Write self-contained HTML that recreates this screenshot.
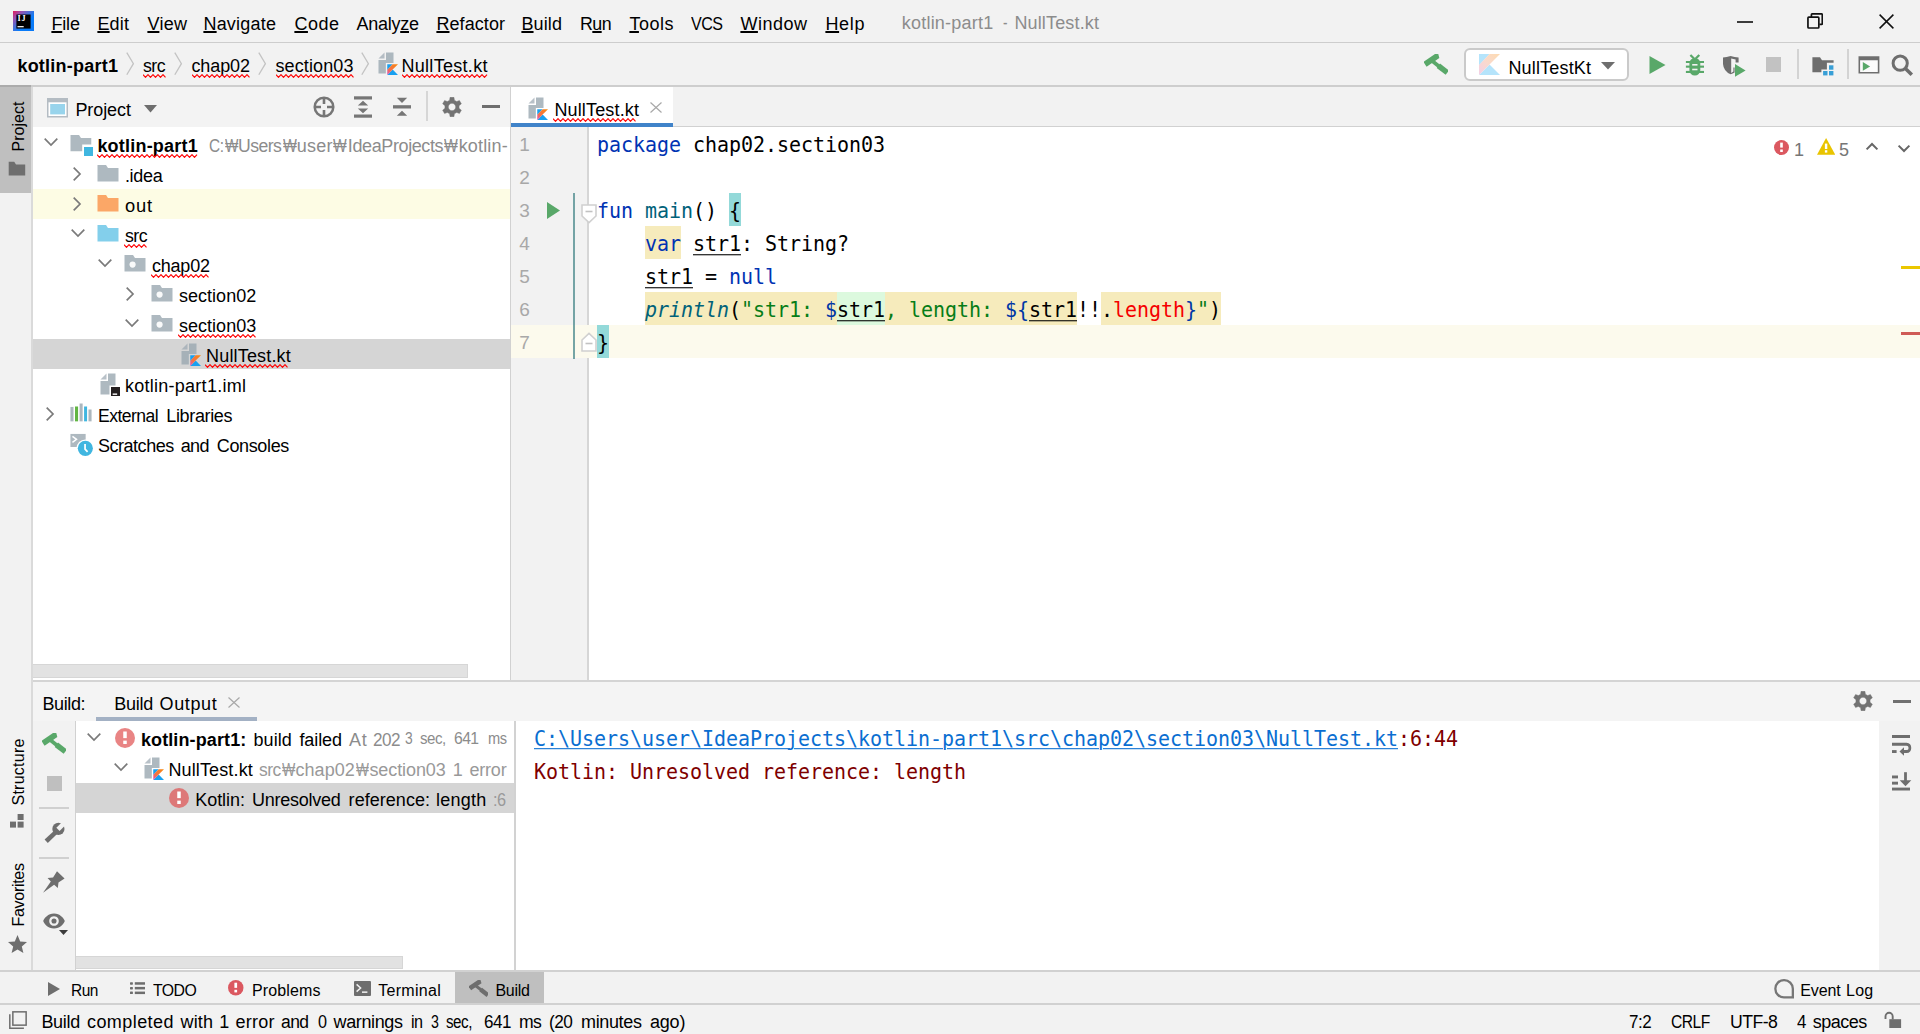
<!DOCTYPE html>
<html lang="en"><head><meta charset="utf-8"><title>kotlin-part1 - NullTest.kt</title>
<style>
html,body{margin:0;padding:0}
body{width:1920px;height:1034px;overflow:hidden;background:#f2f2f2;position:relative;font-family:"Liberation Sans","NanumGothic",sans-serif;font-size:18px;color:#000}
#r>div,#r>svg,#r>span{position:absolute;display:block}
#r>span{white-space:pre;line-height:1}
#r>span.m{font-family:"DejaVu Sans Mono","Liberation Mono",monospace}
u{text-decoration:underline;text-underline-offset:0.6px;text-decoration-thickness:1.8px}
</style></head>
<body><div id="r">
<svg style="left:12.5px;top:10.5px;" width="21" height="20.6" viewBox="0 0 21 20.6"><defs><linearGradient id="ijg" x1="0" y1="0" x2="1" y2="1"><stop offset="0" stop-color="#e31b5c"/><stop offset=".22" stop-color="#9850b0"/><stop offset=".42" stop-color="#4a6fd6"/><stop offset=".62" stop-color="#087cfa"/><stop offset="1" stop-color="#0a78f5"/></linearGradient></defs><rect width="21" height="20.6" fill="url(#ijg)"/><rect x="3.4" y="3.5" width="14.2" height="14.1" fill="#000"/><text x="4.4" y="10.3" font-family="Liberation Serif,serif" font-weight="700" font-size="8.2" letter-spacing=".9" fill="#fff">IJ</text><rect x="4.5" y="15.1" width="6.2" height="1.2" fill="#fff"/></svg>
<span style="font-size:18px;color:#000;letter-spacing:-0.139px;left:51.4px;top:14.76px;"><u>F</u>ile</span>
<span style="font-size:18px;color:#000;letter-spacing:0.190px;left:97.4px;top:14.76px;"><u>E</u>dit</span>
<span style="font-size:18px;color:#000;letter-spacing:0.299px;left:147.4px;top:14.76px;"><u>V</u>iew</span>
<span style="font-size:18px;color:#000;letter-spacing:0.222px;left:203.4px;top:14.76px;"><u>N</u>avigate</span>
<span style="font-size:18px;color:#000;letter-spacing:0.518px;left:294.4px;top:14.76px;"><u>C</u>ode</span>
<span style="font-size:18px;color:#000;letter-spacing:-0.241px;left:356.4px;top:14.76px;">Analy<u>z</u>e</span>
<span style="font-size:18px;color:#000;letter-spacing:0.081px;left:436.4px;top:14.76px;"><u>R</u>efactor</span>
<span style="font-size:18px;color:#000;letter-spacing:0.138px;left:521.4px;top:14.76px;"><u>B</u>uild</span>
<span style="font-size:18px;color:#000;letter-spacing:-0.550px;left:580.4px;top:14.76px;transform-origin:0 0;transform:scaleX(0.9896);">R<u>u</u>n</span>
<span style="font-size:18px;color:#000;letter-spacing:0.517px;left:629.4px;top:14.76px;"><u>T</u>ools</span>
<span style="font-size:18px;color:#000;letter-spacing:-0.550px;left:691.4px;top:14.76px;transform-origin:0 0;transform:scaleX(0.8938);">VCS</span>
<span style="font-size:18px;color:#000;letter-spacing:0.514px;left:740.4px;top:14.76px;"><u>W</u>indow</span>
<span style="font-size:18px;color:#000;letter-spacing:0.690px;left:825.4px;top:14.76px;"><u>H</u>elp</span>
<span style="font-size:18px;color:#8c8c8c;letter-spacing:0.232px;left:901.7px;top:14.26px;">kotlin-part1</span>
 
<span style="font-size:18px;color:#8c8c8c;left:1002.5px;top:14.26px;transform-origin:0 0;transform:scaleX(0.7500);">-</span>
 
<span style="font-size:18px;color:#8c8c8c;letter-spacing:0.157px;left:1014.4px;top:14.26px;">NullTest.kt</span>
<div style="left:1737px;top:20.5px;width:16px;height:2px;background:#3c3c3c;"></div>
<svg style="left:1807px;top:13px;" width="16.4" height="16" viewBox="0 0 16.4 16"><path d="M4.4 4 V1.7 Q4.4 .95 5.1 .95 H14.6 Q15.3 .95 15.3 1.7 V10.7 Q15.3 11.4 14.6 11.4 H12.4" fill="none" stroke="#111" stroke-width="1.7"/><rect x=".95" y="4.2" width="10.9" height="10.8" rx=".8" fill="none" stroke="#111" stroke-width="1.7"/></svg>
<svg style="left:1878.5px;top:13.6px;" width="15" height="15" viewBox="0 0 15 15"><path d="M.6 .6 L14.4 14.4 M14.4 .6 L.6 14.4" stroke="#111" stroke-width="1.5"/></svg>
<div style="left:0px;top:42px;width:1920px;height:1px;background:#cdcdcd;"></div>
<span style="font-size:18px;color:#000;font-weight:700;letter-spacing:0.235px;left:17.4px;top:56.76px;">kotlin-part1</span>
<svg style="left:126px;top:52.3px;" width="9" height="23.4" viewBox="0 0 9 23.4"><path d="M.8 .6 L7.4 11.7 L.8 22.8" fill="none" stroke="#c3c3c3" stroke-width="1.3"/></svg>
<span style="font-size:18px;color:#000;letter-spacing:-0.550px;left:143.4px;top:56.76px;transform-origin:0 0;transform:scaleX(0.9869);">src</span>
<svg style="left:143px;top:74px" width="24" height="4" viewBox="0 0 24 4"><polyline points="0.0,0.7 2.5,3.3 5.0,0.7 7.5,3.3 10.0,0.7 12.5,3.3 15.0,0.7 17.5,3.3 20.0,0.7 22.5,3.3" fill="none" stroke="#ff0000" stroke-width="1.2"/></svg>
<svg style="left:174px;top:52.3px;" width="9" height="23.4" viewBox="0 0 9 23.4"><path d="M.8 .6 L7.4 11.7 L.8 22.8" fill="none" stroke="#c3c3c3" stroke-width="1.3"/></svg>
<span style="font-size:18px;color:#000;letter-spacing:-0.093px;left:191.4px;top:56.76px;">chap02</span>
<svg style="left:192px;top:74px" width="59" height="4" viewBox="0 0 59 4"><polyline points="0.0,0.7 2.5,3.3 5.0,0.7 7.5,3.3 10.0,0.7 12.5,3.3 15.0,0.7 17.5,3.3 20.0,0.7 22.5,3.3 25.0,0.7 27.5,3.3 30.0,0.7 32.5,3.3 35.0,0.7 37.5,3.3 40.0,0.7 42.5,3.3 45.0,0.7 47.5,3.3 50.0,0.7 52.5,3.3 55.0,0.7 57.5,3.3" fill="none" stroke="#ff0000" stroke-width="1.2"/></svg>
<svg style="left:258px;top:52.3px;" width="9" height="23.4" viewBox="0 0 9 23.4"><path d="M.8 .6 L7.4 11.7 L.8 22.8" fill="none" stroke="#c3c3c3" stroke-width="1.3"/></svg>
<span style="font-size:18px;color:#000;letter-spacing:0.130px;left:275.4px;top:56.76px;">section03</span>
<svg style="left:276px;top:74px" width="79" height="4" viewBox="0 0 79 4"><polyline points="0.0,0.7 2.5,3.3 5.0,0.7 7.5,3.3 10.0,0.7 12.5,3.3 15.0,0.7 17.5,3.3 20.0,0.7 22.5,3.3 25.0,0.7 27.5,3.3 30.0,0.7 32.5,3.3 35.0,0.7 37.5,3.3 40.0,0.7 42.5,3.3 45.0,0.7 47.5,3.3 50.0,0.7 52.5,3.3 55.0,0.7 57.5,3.3 60.0,0.7 62.5,3.3 65.0,0.7 67.5,3.3 70.0,0.7 72.5,3.3 75.0,0.7 77.5,3.3" fill="none" stroke="#ff0000" stroke-width="1.2"/></svg>
<svg style="left:361px;top:52.3px;" width="9" height="23.4" viewBox="0 0 9 23.4"><path d="M.8 .6 L7.4 11.7 L.8 22.8" fill="none" stroke="#c3c3c3" stroke-width="1.3"/></svg>
<svg style="left:374px;top:51px;" width="24" height="24" viewBox="0 0 16 16"><polygon points="7,1 3,5 7,5" fill="#9aa7b0" fill-opacity=".7"/><path d="M8,1 L13,1 L13,8 L7.9,8 L7.9,15 L3,15 L3,6 L8,6 Z" fill="#9aa7b0" fill-opacity=".8"/><g transform="translate(8.85,8.8) scale(0.11916666666666667)" opacity="1"><defs><linearGradient id="kg1" x1="0" y1="1" x2="1" y2="0"><stop offset="0" stop-color="#d650c8"/><stop offset=".35" stop-color="#f4704a"/><stop offset="1" stop-color="#f88909"/></linearGradient></defs><polygon points="0,60 30.1,29.9 60,60" fill="#18a0f0"/><polygon points="0,0 30.1,0 0,32.5" fill="#18a0f0"/><polygon points="30.1,0 0,31.7 0,60 30.1,29.9 60,0" fill="url(#kg1)"/></g></svg>
<span style="font-size:18px;color:#000;letter-spacing:0.307px;left:401.4px;top:56.76px;">NullTest.kt</span>
<svg style="left:402px;top:74px" width="86" height="4" viewBox="0 0 86 4"><polyline points="0.0,0.7 2.5,3.3 5.0,0.7 7.5,3.3 10.0,0.7 12.5,3.3 15.0,0.7 17.5,3.3 20.0,0.7 22.5,3.3 25.0,0.7 27.5,3.3 30.0,0.7 32.5,3.3 35.0,0.7 37.5,3.3 40.0,0.7 42.5,3.3 45.0,0.7 47.5,3.3 50.0,0.7 52.5,3.3 55.0,0.7 57.5,3.3 60.0,0.7 62.5,3.3 65.0,0.7 67.5,3.3 70.0,0.7 72.5,3.3 75.0,0.7 77.5,3.3 80.0,0.7 82.5,3.3 85.0,0.7" fill="none" stroke="#ff0000" stroke-width="1.2"/></svg>
<svg style="left:1424px;top:54px;" width="24" height="24" viewBox="0 0 24 24"><g transform="translate(7.6,5.8) rotate(-34)"><path d="M-8 -2.9 H6.2 Q8.2 -2.6 8.6 -0.6 L7.4 2.9 H-8 Z" fill="#59a869"/></g><g transform="translate(7.6,6.6) rotate(37.5)"><rect x="0" y="-1.9" width="10" height="3.8" fill="#59a869"/><rect x="8.5" y="-2.75" width="11.3" height="5.5" fill="#59a869"/></g></svg>
<div style="left:1464px;top:48px;width:165px;height:33px;background:#fff;border:2px solid #cacaca;border-radius:6px;box-sizing:border-box"></div>
<svg style="left:1479px;top:54.2px;" width="21" height="21" viewBox="0 0 21 21"><g transform="translate(0,0) scale(0.35)" opacity="1"><defs><linearGradient id="kg2" x1="0" y1="1" x2="1" y2="0"><stop offset="0" stop-color="#f3cfe6"/><stop offset=".45" stop-color="#f9d9cf"/><stop offset="1" stop-color="#fddbb0"/></linearGradient></defs><polygon points="0,60 30.1,29.9 60,60" fill="#b5e4fb"/><polygon points="0,0 30.1,0 0,32.5" fill="#b5e4fb"/><polygon points="30.1,0 0,31.7 0,60 30.1,29.9 60,0" fill="url(#kg2)"/></g></svg>
<span style="font-size:18px;color:#000;letter-spacing:0.174px;left:1508.4px;top:58.96px;">NullTestKt</span>
<svg style="left:1601px;top:61.5px;" width="14" height="8" viewBox="0 0 14 8"><path d="M0 0 H14 L7 7.5 Z" fill="#6e6e6e"/></svg>
<svg style="left:1649px;top:56px;" width="17" height="18" viewBox="0 0 17 18"><path d="M.5 0 L16.5 9 L.5 18 Z" fill="#59a869"/></svg>
<svg style="left:1683px;top:53px;" width="24" height="24" viewBox="0 0 24 24"><g fill="#59a869"><rect x="6.4" y="5" width="10.9" height="17.5" rx="5.4"/><rect x="2.9" y="8" width="18.1" height="2"/><rect x="2.9" y="12.6" width="18.1" height="2.1"/><rect x="2.9" y="17.9" width="18.1" height="2.1"/><path d="M7.4 1.9 L11.2 5.8 M16.3 1.9 L12.5 5.8" stroke="#59a869" stroke-width="2.2" fill="none"/></g><rect x="9.2" y="11" width="5.3" height="1.6" fill="#f2f2f2"/><rect x="9.2" y="15.7" width="5.3" height="1.6" fill="#f2f2f2"/></svg>
<svg style="left:1722px;top:54px;" width="24" height="24" viewBox="0 0 24 24"><path d="M1 3.4 Q4.5 3.2 8.6 1.9 Q12.6 3.2 16.6 3.4 V8.4 H13.6 V5.6 L9.2 4.6 V19 L11.4 17.4 V13.6 H12.6 V18.6 Q10.6 19.6 8.6 20.2 Q1.6 17.4 1 10 Z" fill="#6e6e6e"/><path d="M13 10 L23.6 16.4 L13 22.8 Z" fill="#59a869"/></svg>
<div style="left:1766px;top:57px;width:15px;height:15px;background:#c2c2c2;"></div>
<div style="left:1797px;top:49px;width:2px;height:30px;background:#d3d3d3;"></div>
<svg style="left:1810px;top:54px;" width="26" height="24" viewBox="0 0 26 24"><path d="M2.4 3.3 H10 L12 6.3 H23.6 V8.8 H16.9 V15.6 H11.4 V18.2 H2.4 Z" fill="#6e6e6e"/><g fill="#389fd6"><rect x="19" y="11.3" width="4.4" height="4.4"/><rect x="13.1" y="17" width="4.4" height="4.4"/><rect x="19" y="17" width="4.4" height="4.4"/></g></svg>
<div style="left:1847px;top:49px;width:2px;height:30px;background:#d3d3d3;"></div>
<svg style="left:1857px;top:54px;" width="24" height="22" viewBox="0 0 24 22"><rect x="1.5" y="2.2" width="20.9" height="17.4" fill="#fbfbfb"/><path d="M1.5 2.2 H22.4 V19.6 H1.5 Z M3.1 6.3 V17.9 H20.8 V6.3 Z" fill="#6e6e6e" fill-rule="evenodd"/><path d="M5.8 8 L13.1 12.4 L5.8 16.8 Z" fill="#59a869"/></svg>
<svg style="left:1889px;top:52px;" width="26" height="26" viewBox="0 0 26 26"><circle cx="11.2" cy="11.2" r="7.1" fill="none" stroke="#6e6e6e" stroke-width="3"/><path d="M16.4 16.4 L22.8 22.8" stroke="#6e6e6e" stroke-width="3.5"/></svg>
<div style="left:0px;top:85px;width:1920px;height:2px;background:#cecece;"></div>
<div style="left:0px;top:85px;width:31px;height:108px;background:#bfbfbf;"></div>
<div style="left:0px;top:85px;width:31px;height:2px;background:#ababab;"></div>
<div style="left:31px;top:87px;width:2px;height:883px;background:#dadada;"></div>
<span style="font-size:16px;color:#000;letter-spacing:0.034px;left:24.9px;top:137.96px;transform-origin:0 13.54px;transform:rotate(-90deg);">Project</span>
<svg style="left:8px;top:161px;" width="18" height="15" viewBox="0 0 18 15"><path d="M.7 14.4 V.8 H6.2 L8 3.4 H17.2 V14.4 Z" fill="#6e6e6e"/></svg>
<span style="font-size:16px;color:#000;letter-spacing:0.260px;left:24.9px;top:791.96px;transform-origin:0 13.54px;transform:rotate(-90deg);">Structure</span>
<svg style="left:10px;top:814px;" width="14" height="14" viewBox="0 0 14 14"><rect x="7.6" y="0" width="6" height="6" fill="#6e6e6e"/><rect x="0" y="7.6" width="6" height="6" fill="#6e6e6e"/><rect x="7.6" y="7.6" width="6" height="6" fill="#6e6e6e"/></svg>
<span style="font-size:16px;color:#000;letter-spacing:-0.287px;left:24.9px;top:913.46px;transform-origin:0 13.54px;transform:rotate(-90deg);">Favorites</span>
<svg style="left:7.5px;top:934.5px;" width="19" height="18" viewBox="0 0 19 18"><path d="M9.5 0 L12.2 6.4 L19 7 L13.8 11.4 L15.4 18 L9.5 14.4 L3.6 18 L5.2 11.4 L0 7 L6.8 6.4 Z" fill="#6e6e6e"/></svg>
<div style="left:33px;top:87px;width:477px;height:40px;background:#f3f3f3;"></div>
<div style="left:33px;top:127px;width:477px;height:553px;background:#fff;"></div>
<div style="left:510px;top:87px;width:1px;height:594px;background:#d1d1d1;"></div>
<svg style="left:46.5px;top:98px;" width="21" height="19.5" viewBox="0 0 21 19.5"><rect x=".75" y=".75" width="19.5" height="18" fill="#fff" stroke="#b4bcc3" stroke-width="1.5"/><rect x="0" y="0" width="21" height="4.3" fill="#b4bcc3"/><rect x="3.2" y="6" width="14.8" height="10.4" fill="#98d4ec"/></svg>
<span style="font-size:18px;color:#000;letter-spacing:-0.072px;left:75.4px;top:100.76px;">Project</span>
<svg style="left:143.5px;top:105px;" width="13" height="8" viewBox="0 0 13 8"><path d="M0 0 H13 L6.5 7.5 Z" fill="#6e6e6e"/></svg>
<svg style="left:313px;top:96px;" width="22" height="22" viewBox="0 0 22 22"><circle cx="11" cy="11" r="9.3" fill="none" stroke="#767676" stroke-width="2.5"/><path d="M11 2 V8 M11 14 V20 M2 11 H8 M14 11 H20" stroke="#767676" stroke-width="2.6"/></svg>
<svg style="left:354px;top:96px;" width="18" height="22" viewBox="0 0 18 22"><rect x="0" y=".3" width="18" height="3.2" fill="#767676"/><rect x="0" y="18.5" width="18" height="3.2" fill="#767676"/><path d="M3.8 9.6 L9 4.8 L14.2 9.6 Z M3.8 12.4 L9 17.2 L14.2 12.4 Z" fill="#767676"/></svg>
<svg style="left:393px;top:96px;" width="18" height="22" viewBox="0 0 18 22"><rect x="0" y="9.2" width="18" height="3.3" fill="#767676"/><path d="M3.8 1.8 L9 7 L14.2 1.8 Z M3.8 19.8 L9 14.8 L14.2 19.8 Z" fill="#767676"/></svg>
<div style="left:426px;top:91px;width:2px;height:30px;background:#d6d6d6;"></div>
<svg style="left:442px;top:97px;" width="20" height="20" viewBox="0 0 20 20"><path d="M7.60,3.21 L8.03,0.30 L11.97,0.30 L12.40,3.21 L14.68,4.53 L17.42,3.45 L19.39,6.85 L17.08,8.69 L17.08,11.31 L19.39,13.15 L17.42,16.55 L14.68,15.47 L12.40,16.79 L11.97,19.70 L8.03,19.70 L7.60,16.79 L5.32,15.47 L2.58,16.55 L0.61,13.15 L2.92,11.31 L2.92,8.69 L0.61,6.85 L2.58,3.45 L5.32,4.53Z M10,6.3 a3.7,3.7 0 1,0 0.001,0Z" fill="#737373" fill-rule="evenodd" stroke="#737373" stroke-width=".4" stroke-linejoin="round"/></svg>
<div style="left:482px;top:105px;width:18px;height:3px;background:#6e6e6e;"></div>
<div style="left:33px;top:189px;width:477px;height:30px;background:#fdfce4;"></div>
<div style="left:33px;top:339px;width:477px;height:30px;background:#d5d5d5;"></div>
<svg style="left:42.5px;top:137.3px;" width="16" height="10" viewBox="0 0 16 10"><path d="M1.7 1.7 L8 8 L14.3 1.7" fill="none" stroke="#7a7a7a" stroke-width="1.7"/></svg>
<svg style="left:69px;top:132px;" width="24" height="24" viewBox="0 0 16 16"><path d="M1,12.75 L8.8,12.75 L8.8,8.4 L14.85,8.4 L14.85,4 L7.98,4 L6.7,2 L1,2 Z" fill="#9aa7b0" fill-opacity="0.8"/><rect x="10" y="10" width="6" height="6" fill="#40b6e0"/></svg>
<span style="font-size:18px;color:#000;font-weight:700;letter-spacing:0.208px;left:97.4px;top:136.76px;">kotlin-part1</span>
<svg style="left:97px;top:154px" width="102" height="4" viewBox="0 0 102 4"><polyline points="0.0,0.7 2.5,3.3 5.0,0.7 7.5,3.3 10.0,0.7 12.5,3.3 15.0,0.7 17.5,3.3 20.0,0.7 22.5,3.3 25.0,0.7 27.5,3.3 30.0,0.7 32.5,3.3 35.0,0.7 37.5,3.3 40.0,0.7 42.5,3.3 45.0,0.7 47.5,3.3 50.0,0.7 52.5,3.3 55.0,0.7 57.5,3.3 60.0,0.7 62.5,3.3 65.0,0.7 67.5,3.3 70.0,0.7 72.5,3.3 75.0,0.7 77.5,3.3 80.0,0.7 82.5,3.3 85.0,0.7 87.5,3.3 90.0,0.7 92.5,3.3 95.0,0.7 97.5,3.3 100.0,0.7" fill="none" stroke="#ff0000" stroke-width="1.2"/></svg>
<span style="font-size:18px;color:#8c8c8c;letter-spacing:-0.550px;left:209.2px;top:136.76px;transform-origin:0 0;transform:scaleX(0.8539);">C:</span>
<span style="font-size:18px;color:#8c8c8c;left:224.7px;top:136.76px;transform-origin:0 0;transform:scaleX(0.7882);">₩</span>
<span style="font-size:18px;color:#8c8c8c;letter-spacing:-0.550px;left:238.3px;top:136.76px;transform-origin:0 0;transform:scaleX(0.9796);">Users</span>
<span style="font-size:18px;color:#8c8c8c;left:282.8px;top:136.76px;transform-origin:0 0;transform:scaleX(0.8176);">₩</span>
<span style="font-size:18px;color:#8c8c8c;letter-spacing:0.261px;left:296.7px;top:136.76px;">user</span>
<span style="font-size:18px;color:#8c8c8c;left:333.4px;top:136.76px;transform-origin:0 0;transform:scaleX(0.8059);">₩</span>
<span style="font-size:18px;color:#8c8c8c;letter-spacing:-0.387px;left:347.8px;top:136.76px;">IdeaProjects</span>
<span style="font-size:18px;color:#8c8c8c;left:444.3px;top:136.76px;transform-origin:0 0;transform:scaleX(0.8118);">₩</span>
<span style="font-size:18px;color:#8c8c8c;letter-spacing:0.164px;left:458.7px;top:136.76px;">kotlin-</span>
<svg style="left:71.5px;top:166px;" width="10" height="16" viewBox="0 0 10 16"><path d="M1.7 1.7 L8 8 L1.7 14.3" fill="none" stroke="#7a7a7a" stroke-width="1.7"/></svg>
<svg style="left:96px;top:162px;" width="24" height="24" viewBox="0 0 16 16"><path d="M1,13 L15,13 L15,4 L7.98,4 L6.7,2 L1,2 Z" fill="#9aa7b0" fill-opacity="0.8"/></svg>
<span style="font-size:18px;color:#000;letter-spacing:-0.312px;left:124.9px;top:166.76px;">.idea</span>
<svg style="left:71.5px;top:196px;" width="10" height="16" viewBox="0 0 10 16"><path d="M1.7 1.7 L8 8 L1.7 14.3" fill="none" stroke="#7a7a7a" stroke-width="1.7"/></svg>
<svg style="left:96px;top:192px;" width="24" height="24" viewBox="0 0 16 16"><path d="M1,13 L15,13 L15,4 L7.98,4 L6.7,2 L1,2 Z" fill="#f98b3e" fill-opacity="0.75"/></svg>
<span style="font-size:18px;color:#000;letter-spacing:0.800px;left:124.9px;top:196.76px;transform-origin:0 0;transform:scaleX(1.0176);">out</span>
<svg style="left:69.5px;top:228px;" width="16" height="10" viewBox="0 0 16 10"><path d="M1.7 1.7 L8 8 L14.3 1.7" fill="none" stroke="#7a7a7a" stroke-width="1.7"/></svg>
<svg style="left:96px;top:222px;" width="24" height="24" viewBox="0 0 16 16"><path d="M1,13 L15,13 L15,4 L7.98,4 L6.7,2 L1,2 Z" fill="#40b6e0" fill-opacity="0.65"/></svg>
<span style="font-size:18px;color:#000;letter-spacing:-0.550px;left:124.9px;top:226.76px;transform-origin:0 0;transform:scaleX(0.9869);">src</span>
<svg style="left:124px;top:244px" width="25" height="4" viewBox="0 0 25 4"><polyline points="0.0,0.7 2.5,3.3 5.0,0.7 7.5,3.3 10.0,0.7 12.5,3.3 15.0,0.7 17.5,3.3 20.0,0.7 22.5,3.3" fill="none" stroke="#ff0000" stroke-width="1.2"/></svg>
<svg style="left:96.5px;top:258px;" width="16" height="10" viewBox="0 0 16 10"><path d="M1.7 1.7 L8 8 L14.3 1.7" fill="none" stroke="#7a7a7a" stroke-width="1.7"/></svg>
<svg style="left:123px;top:252px;" width="24" height="24" viewBox="0 0 16 16"><path d="M1,13 L15,13 L15,4 L7.98,4 L6.7,2 L1,2 Z" fill="#9aa7b0" fill-opacity="0.8"/><circle cx="6.4" cy="8.4" r="2.05" fill="#fff" fill-opacity=".92"/></svg>
<span style="font-size:18px;color:#000;letter-spacing:-0.193px;left:151.9px;top:256.76px;">chap02</span>
<svg style="left:151px;top:274px" width="60" height="4" viewBox="0 0 60 4"><polyline points="0.0,0.7 2.5,3.3 5.0,0.7 7.5,3.3 10.0,0.7 12.5,3.3 15.0,0.7 17.5,3.3 20.0,0.7 22.5,3.3 25.0,0.7 27.5,3.3 30.0,0.7 32.5,3.3 35.0,0.7 37.5,3.3 40.0,0.7 42.5,3.3 45.0,0.7 47.5,3.3 50.0,0.7 52.5,3.3 55.0,0.7 57.5,3.3" fill="none" stroke="#ff0000" stroke-width="1.2"/></svg>
<svg style="left:125px;top:286px;" width="10" height="16" viewBox="0 0 10 16"><path d="M1.7 1.7 L8 8 L1.7 14.3" fill="none" stroke="#7a7a7a" stroke-width="1.7"/></svg>
<svg style="left:150px;top:282px;" width="24" height="24" viewBox="0 0 16 16"><path d="M1,13 L15,13 L15,4 L7.98,4 L6.7,2 L1,2 Z" fill="#9aa7b0" fill-opacity="0.8"/><circle cx="6.4" cy="8.4" r="2.05" fill="#fff" fill-opacity=".92"/></svg>
<span style="font-size:18px;color:#000;letter-spacing:0.042px;left:178.9px;top:286.76px;">section02</span>
<svg style="left:123.5px;top:318px;" width="16" height="10" viewBox="0 0 16 10"><path d="M1.7 1.7 L8 8 L14.3 1.7" fill="none" stroke="#7a7a7a" stroke-width="1.7"/></svg>
<svg style="left:150px;top:312px;" width="24" height="24" viewBox="0 0 16 16"><path d="M1,13 L15,13 L15,4 L7.98,4 L6.7,2 L1,2 Z" fill="#9aa7b0" fill-opacity="0.8"/><circle cx="6.4" cy="8.4" r="2.05" fill="#fff" fill-opacity=".92"/></svg>
<span style="font-size:18px;color:#000;letter-spacing:0.042px;left:178.9px;top:316.76px;">section03</span>
<svg style="left:178px;top:334px" width="79" height="4" viewBox="0 0 79 4"><polyline points="0.0,0.7 2.5,3.3 5.0,0.7 7.5,3.3 10.0,0.7 12.5,3.3 15.0,0.7 17.5,3.3 20.0,0.7 22.5,3.3 25.0,0.7 27.5,3.3 30.0,0.7 32.5,3.3 35.0,0.7 37.5,3.3 40.0,0.7 42.5,3.3 45.0,0.7 47.5,3.3 50.0,0.7 52.5,3.3 55.0,0.7 57.5,3.3 60.0,0.7 62.5,3.3 65.0,0.7 67.5,3.3 70.0,0.7 72.5,3.3 75.0,0.7 77.5,3.3" fill="none" stroke="#ff0000" stroke-width="1.2"/></svg>
<svg style="left:177px;top:342px;" width="24" height="24" viewBox="0 0 16 16"><polygon points="7,1 3,5 7,5" fill="#9aa7b0" fill-opacity=".7"/><path d="M8,1 L13,1 L13,8 L7.9,8 L7.9,15 L3,15 L3,6 L8,6 Z" fill="#9aa7b0" fill-opacity=".8"/><g transform="translate(8.85,8.8) scale(0.11916666666666667)" opacity="1"><defs><linearGradient id="kg3" x1="0" y1="1" x2="1" y2="0"><stop offset="0" stop-color="#d650c8"/><stop offset=".35" stop-color="#f4704a"/><stop offset="1" stop-color="#f88909"/></linearGradient></defs><polygon points="0,60 30.1,29.9 60,60" fill="#18a0f0"/><polygon points="0,0 30.1,0 0,32.5" fill="#18a0f0"/><polygon points="30.1,0 0,31.7 0,60 30.1,29.9 60,0" fill="url(#kg3)"/></g></svg>
<span style="font-size:18px;color:#000;letter-spacing:0.167px;left:206.1px;top:346.76px;">NullTest.kt</span>
<svg style="left:205px;top:364px" width="85" height="4" viewBox="0 0 85 4"><polyline points="0.0,0.7 2.5,3.3 5.0,0.7 7.5,3.3 10.0,0.7 12.5,3.3 15.0,0.7 17.5,3.3 20.0,0.7 22.5,3.3 25.0,0.7 27.5,3.3 30.0,0.7 32.5,3.3 35.0,0.7 37.5,3.3 40.0,0.7 42.5,3.3 45.0,0.7 47.5,3.3 50.0,0.7 52.5,3.3 55.0,0.7 57.5,3.3 60.0,0.7 62.5,3.3 65.0,0.7 67.5,3.3 70.0,0.7 72.5,3.3 75.0,0.7 77.5,3.3 80.0,0.7 82.5,3.3" fill="none" stroke="#ff0000" stroke-width="1.2"/></svg>
<svg style="left:96px;top:372px;" width="24" height="24" viewBox="0 0 16 16"><polygon points="7,1 3,5 7,5" fill="#9aa7b0" fill-opacity=".7"/><path d="M8,1 L13,1 L13,9 L9,9 L9,15 L3,15 L3,6 L8,6 Z" fill="#9aa7b0" fill-opacity=".8"/><rect x="10" y="10" width="6" height="6" fill="#231f20"/><rect x="11.1" y="14.3" width="3" height=".95" fill="#fff"/></svg>
<span style="font-size:18px;color:#000;letter-spacing:0.270px;left:124.9px;top:376.76px;">kotlin-part1.iml</span>
<svg style="left:44.5px;top:406px;" width="10" height="16" viewBox="0 0 10 16"><path d="M1.7 1.7 L8 8 L1.7 14.3" fill="none" stroke="#7a7a7a" stroke-width="1.7"/></svg>
<svg style="left:69px;top:402px;" width="24" height="24" viewBox="0 0 16 16"><g fill-opacity=".82"><rect x=".95" y="3.3" width="2.05" height="9.6" fill="#9aa7b0"/><rect x="4" y="3" width="2.05" height="9.9" fill="#62b543" fill-opacity="1"/><rect x="7.05" y="1" width="2.05" height="11.9" fill="#9aa7b0"/><rect x="10.05" y="3" width="2" height="9.9" fill="#40b6e0" fill-opacity="1"/><rect x="13" y="5" width="2.05" height="7.9" fill="#9aa7b0"/></g></svg>
<span style="font-size:18px;color:#000;letter-spacing:-0.550px;left:98.4px;top:406.76px;transform-origin:0 0;transform:scaleX(0.9759);">External</span>
 
<span style="font-size:18px;color:#000;letter-spacing:-0.354px;left:166.3px;top:406.76px;">Libraries</span>
<svg style="left:69px;top:432px;" width="24" height="24" viewBox="0 0 16 16"><rect x=".95" y="1.3" width="10.15" height="8.7" fill="#9aa7b0" fill-opacity=".8"/><path d="M2.3 2.9 L5 4.9 L2.3 6.9" fill="none" stroke="#fff" stroke-width="1"/><circle cx="10.9" cy="10.9" r="5.9" fill="#fff"/><circle cx="10.9" cy="10.9" r="5.05" fill="#40b6e0"/><path d="M10.7 8 V11.4 L12.4 13.2" fill="none" stroke="#fff" stroke-width="1.15"/></svg>
<span style="font-size:18px;color:#000;letter-spacing:-0.481px;left:98.0px;top:436.76px;">Scratches</span>
 
<span style="font-size:18px;color:#000;letter-spacing:-0.548px;left:180.65px;top:436.76px;">and</span>
 
<span style="font-size:18px;color:#000;letter-spacing:-0.364px;left:216.8px;top:436.76px;">Consoles</span>
<div style="left:33px;top:664px;width:435px;height:14px;background:#e2e2e2;border:1px solid #d6d6d6;border-left:none;box-sizing:border-box"></div>
<div style="left:511px;top:87px;width:1409px;height:39px;background:#f2f2f2;"></div>
<div style="left:511px;top:126px;width:1409px;height:1px;background:#d1d1d1;"></div>
<div style="left:511px;top:87px;width:162px;height:36px;background:#fff;"></div>
<div style="left:511px;top:123px;width:162px;height:4px;background:#4083c9;"></div>
<svg style="left:524px;top:96px;" width="24" height="24" viewBox="0 0 16 16"><polygon points="7,1 3,5 7,5" fill="#9aa7b0" fill-opacity=".7"/><path d="M8,1 L13,1 L13,8 L7.9,8 L7.9,15 L3,15 L3,6 L8,6 Z" fill="#9aa7b0" fill-opacity=".8"/><g transform="translate(8.85,8.8) scale(0.11916666666666667)" opacity="1"><defs><linearGradient id="kg4" x1="0" y1="1" x2="1" y2="0"><stop offset="0" stop-color="#d650c8"/><stop offset=".35" stop-color="#f4704a"/><stop offset="1" stop-color="#f88909"/></linearGradient></defs><polygon points="0,60 30.1,29.9 60,60" fill="#18a0f0"/><polygon points="0,0 30.1,0 0,32.5" fill="#18a0f0"/><polygon points="30.1,0 0,31.7 0,60 30.1,29.9 60,0" fill="url(#kg4)"/></g></svg>
<span style="font-size:18px;color:#000;letter-spacing:0.157px;left:554.4px;top:100.76px;">NullTest.kt</span>
<svg style="left:553px;top:118px" width="85" height="4" viewBox="0 0 85 4"><polyline points="0.0,0.7 2.5,3.3 5.0,0.7 7.5,3.3 10.0,0.7 12.5,3.3 15.0,0.7 17.5,3.3 20.0,0.7 22.5,3.3 25.0,0.7 27.5,3.3 30.0,0.7 32.5,3.3 35.0,0.7 37.5,3.3 40.0,0.7 42.5,3.3 45.0,0.7 47.5,3.3 50.0,0.7 52.5,3.3 55.0,0.7 57.5,3.3 60.0,0.7 62.5,3.3 65.0,0.7 67.5,3.3 70.0,0.7 72.5,3.3 75.0,0.7 77.5,3.3 80.0,0.7 82.5,3.3" fill="none" stroke="#ff0000" stroke-width="1.2"/></svg>
<svg style="left:650px;top:102px;" width="12" height="11" viewBox="0 0 12 11"><path d="M.5 .5 L11.5 10.5 M11.5 .5 L.5 10.5" stroke="#a8a8a8" stroke-width="1.2"/></svg>
<div style="left:511px;top:127px;width:1409px;height:553px;background:#fff;"></div>
<div style="left:511px;top:127px;width:77px;height:553px;background:#f2f2f2;"></div>
<div style="left:587px;top:127px;width:2px;height:553px;background:#d6d6d6;"></div>
<div style="left:511px;top:325px;width:1409px;height:33px;background:#fcfaed;"></div>
<div style="left:729px;top:193px;width:12px;height:33px;background:#93d9d9;"></div>
<div style="left:597px;top:325px;width:12px;height:33px;background:#93d9d9;"></div>
<div style="left:645px;top:226px;width:36px;height:33px;background:#f6ebbc;"></div>
<div style="left:645px;top:292px;width:576px;height:33px;background:#f6ebbc;"></div>
<div style="left:837px;top:292px;width:48px;height:33px;background:#dcf9de;"></div>
<div style="left:1077px;top:292px;width:24px;height:33px;background:#fff;"></div>
<span style="font-size:19px;color:#a8a8a8;left:519.3px;top:135.22px;">1</span>
<span style="font-size:19px;color:#a8a8a8;left:519.3px;top:168.22px;">2</span>
<span style="font-size:19px;color:#a8a8a8;left:519.3px;top:201.22px;">3</span>
<span style="font-size:19px;color:#a8a8a8;left:519.3px;top:234.22px;">4</span>
<span style="font-size:19px;color:#a8a8a8;left:519.3px;top:267.22px;">5</span>
<span style="font-size:19px;color:#a8a8a8;left:519.3px;top:300.22px;">6</span>
<span style="font-size:19px;color:#a8a8a8;left:519.3px;top:333.22px;">7</span>
<svg style="left:547px;top:202px;" width="13" height="17" viewBox="0 0 13 17"><path d="M0 0 L13 8.5 L0 17 Z" fill="#59a869"/></svg>
<svg style="left:572px;top:193px;" width="4" height="166" viewBox="0 0 4 166"><rect x="1.15" y="0" width="1.7" height="166" fill="#5f9699"/></svg>
<svg style="left:581px;top:203.5px;" width="16" height="20" viewBox="0 0 16 20"><path d="M1 1 H15 V12 L8 18.6 L1 12 Z" fill="#fff" stroke="#d0d0d0" stroke-width="1.6"/><path d="M4.5 7.5 H11.5" stroke="#c2c2c2" stroke-width="1.6"/></svg>
<svg style="left:581px;top:332px;" width="16" height="20" viewBox="0 0 16 20"><path d="M1 19 H15 V8 L8 1.4 L1 8 Z" fill="#fff" stroke="#d0d0d0" stroke-width="1.6"/><path d="M4.5 11.5 H11.5" stroke="#c2c2c2" stroke-width="1.6"/></svg>
<span class="m" style="font-size:20px;color:#0033b3;letter-spacing:-0.042px;left:597px;top:134.58px;transform-origin:0 16.92px;transform:scaleY(1.07);">package</span>
<span class="m" style="font-size:20px;color:#000;letter-spacing:-0.041px;left:693px;top:134.58px;transform-origin:0 16.92px;transform:scaleY(1.07);">chap02.section03</span>
<span class="m" style="font-size:20px;color:#0033b3;letter-spacing:-0.042px;left:597px;top:200.58px;transform-origin:0 16.92px;transform:scaleY(1.07);">fun</span>
<span class="m" style="font-size:20px;color:#00627a;letter-spacing:-0.043px;left:645px;top:200.58px;transform-origin:0 16.92px;transform:scaleY(1.07);">main</span>
<span class="m" style="font-size:20px;color:#000;letter-spacing:-0.043px;left:693px;top:200.58px;transform-origin:0 16.92px;transform:scaleY(1.07);">() {</span>
<span class="m" style="font-size:20px;color:#0033b3;letter-spacing:-0.042px;left:645px;top:233.58px;transform-origin:0 16.92px;transform:scaleY(1.07);">var</span>
<span class="m" style="font-size:20px;color:#000;letter-spacing:-0.043px;text-decoration:underline;text-underline-offset:2.6px;text-decoration-thickness:1px;left:693px;top:233.58px;transform-origin:0 16.92px;transform:scaleY(1.07);">str1</span>
<span class="m" style="font-size:20px;color:#000;letter-spacing:-0.042px;left:741px;top:233.58px;transform-origin:0 16.92px;transform:scaleY(1.07);">: String?</span>
<span class="m" style="font-size:20px;color:#000;letter-spacing:-0.043px;text-decoration:underline;text-underline-offset:2.6px;text-decoration-thickness:1px;left:645px;top:266.58px;transform-origin:0 16.92px;transform:scaleY(1.07);">str1</span>
<span class="m" style="font-size:20px;color:#000;letter-spacing:-0.047px;left:705px;top:266.58px;transform-origin:0 16.92px;transform:scaleY(1.07);">=</span>
<span class="m" style="font-size:20px;color:#0033b3;letter-spacing:-0.043px;left:729px;top:266.58px;transform-origin:0 16.92px;transform:scaleY(1.07);">null</span>
<span class="m" style="font-size:20px;color:#00627a;letter-spacing:-0.042px;font-style:italic;left:645px;top:299.58px;transform-origin:0 16.92px;transform:scaleY(1.07);">println</span>
<span class="m" style="font-size:20px;color:#000;letter-spacing:-0.047px;left:729px;top:299.58px;transform-origin:0 16.92px;transform:scaleY(1.07);">(</span>
<span class="m" style="font-size:20px;color:#067d17;letter-spacing:-0.042px;left:741px;top:299.58px;transform-origin:0 16.92px;transform:scaleY(1.07);">"str1: </span>
<span class="m" style="font-size:20px;color:#0037a6;letter-spacing:-0.047px;left:825px;top:299.58px;transform-origin:0 16.92px;transform:scaleY(1.07);">$</span>
<span class="m" style="font-size:20px;color:#000;letter-spacing:-0.043px;text-decoration:underline;text-underline-offset:2.6px;text-decoration-thickness:1px;left:837px;top:299.58px;transform-origin:0 16.92px;transform:scaleY(1.07);">str1</span>
<span class="m" style="font-size:20px;color:#067d17;letter-spacing:-0.042px;left:885px;top:299.58px;transform-origin:0 16.92px;transform:scaleY(1.07);">, length: </span>
<span class="m" style="font-size:20px;color:#0037a6;letter-spacing:-0.047px;left:1005px;top:299.58px;transform-origin:0 16.92px;transform:scaleY(1.07);">${</span>
<span class="m" style="font-size:20px;color:#000;letter-spacing:-0.043px;text-decoration:underline;text-underline-offset:2.6px;text-decoration-thickness:1px;left:1029px;top:299.58px;transform-origin:0 16.92px;transform:scaleY(1.07);">str1</span>
<span class="m" style="font-size:20px;color:#000;letter-spacing:-0.042px;left:1077px;top:299.58px;transform-origin:0 16.92px;transform:scaleY(1.07);">!!.</span>
<span class="m" style="font-size:20px;color:#f50000;letter-spacing:-0.042px;left:1113px;top:299.58px;transform-origin:0 16.92px;transform:scaleY(1.07);">length</span>
<span class="m" style="font-size:20px;color:#0037a6;letter-spacing:-0.047px;left:1185px;top:299.58px;transform-origin:0 16.92px;transform:scaleY(1.07);">}</span>
<span class="m" style="font-size:20px;color:#067d17;letter-spacing:-0.047px;left:1197px;top:299.58px;transform-origin:0 16.92px;transform:scaleY(1.07);">"</span>
<span class="m" style="font-size:20px;color:#000;letter-spacing:-0.047px;left:1209px;top:299.58px;transform-origin:0 16.92px;transform:scaleY(1.07);">)</span>
<span class="m" style="font-size:20px;color:#000;letter-spacing:-0.047px;left:597px;top:332.58px;transform-origin:0 16.92px;transform:scaleY(1.07);">}</span>
<svg style="left:1773.5px;top:139.5px;" width="15" height="15" viewBox="0 0 16 16"><circle cx="8" cy="8" r="8" fill="#db5860" fill-opacity="1"/><rect x="6.6" y="2.8" width="2.8" height="5.3" fill="#fff"/><rect x="6.6" y="10.1" width="2.8" height="2.7" fill="#fff"/></svg>
<span style="font-size:18px;color:#767676;left:1794px;top:140.56px;">1</span>
<svg style="left:1816.8px;top:138px;" width="18.2" height="16.7" viewBox="0 0 18.2 16.7"><path d="M9.1 0 L18.2 16.7 H0 Z" fill="#e9c400"/><rect x="7.9" y="5.6" width="2.4" height="5.4" fill="#fff"/><rect x="7.9" y="12.2" width="2.4" height="2.4" fill="#fff"/></svg>
<span style="font-size:18px;color:#767676;left:1839px;top:140.56px;">5</span>
<svg style="left:1865px;top:142px;" width="14" height="9" viewBox="0 0 14 9"><path d="M1.6 7.4 L7 2 L12.4 7.4" fill="none" stroke="#666" stroke-width="2"/></svg>
<svg style="left:1897px;top:143.5px;" width="14" height="9" viewBox="0 0 14 9"><path d="M1.6 1.6 L7 7 L12.4 1.6" fill="none" stroke="#666" stroke-width="2"/></svg>
<div style="left:1901px;top:266px;width:19px;height:3px;background:#ebc700;"></div>
<div style="left:1901px;top:332px;width:19px;height:3px;background:#cf5b56;"></div>
<div style="left:33px;top:680px;width:1887px;height:2px;background:#d4d4d4;"></div>
<div style="left:33px;top:682px;width:1887px;height:39px;background:#f4f4f4;"></div>
<span style="font-size:18px;color:#000;letter-spacing:-0.366px;left:42.4px;top:694.76px;">Build:</span>
<span style="font-size:18px;color:#000;letter-spacing:-0.283px;left:114.3px;top:694.76px;">Build</span>
 
<span style="font-size:18px;color:#000;letter-spacing:0.611px;left:159.6px;top:694.76px;">Output</span>
<svg style="left:228px;top:696.5px;" width="12" height="11" viewBox="0 0 12 11"><path d="M.5 .5 L11.5 10.5 M11.5 .5 L.5 10.5" stroke="#a8a8a8" stroke-width="1.2"/></svg>
<div style="left:96px;top:717px;width:160.5px;height:4px;background:#a3b1c4;"></div>
<svg style="left:1853px;top:691px;" width="20" height="20" viewBox="0 0 20 20"><path d="M7.60,3.21 L8.03,0.30 L11.97,0.30 L12.40,3.21 L14.68,4.53 L17.42,3.45 L19.39,6.85 L17.08,8.69 L17.08,11.31 L19.39,13.15 L17.42,16.55 L14.68,15.47 L12.40,16.79 L11.97,19.70 L8.03,19.70 L7.60,16.79 L5.32,15.47 L2.58,16.55 L0.61,13.15 L2.92,11.31 L2.92,8.69 L0.61,6.85 L2.58,3.45 L5.32,4.53Z M10,6.3 a3.7,3.7 0 1,0 0.001,0Z" fill="#737373" fill-rule="evenodd" stroke="#737373" stroke-width=".4" stroke-linejoin="round"/></svg>
<div style="left:1893px;top:700px;width:18px;height:3px;background:#707070;"></div>
<div style="left:33px;top:721px;width:42px;height:250px;background:#f2f2f2;"></div>
<div style="left:75px;top:721px;width:1px;height:250px;background:#d1d1d1;"></div>
<div style="left:76px;top:721px;width:438px;height:250px;background:#fff;"></div>
<div style="left:514px;top:721px;width:2px;height:250px;background:#d2d2d2;"></div>
<div style="left:516px;top:721px;width:1363px;height:250px;background:#fff;"></div>
<div style="left:1879px;top:721px;width:41px;height:250px;background:#f2f2f2;"></div>
<svg style="left:42px;top:733px;" width="24" height="24" viewBox="0 0 24 24"><g transform="translate(7.6,5.8) rotate(-34)"><path d="M-8 -2.9 H6.2 Q8.2 -2.6 8.6 -0.6 L7.4 2.9 H-8 Z" fill="#59a869"/></g><g transform="translate(7.6,6.6) rotate(37.5)"><rect x="0" y="-1.9" width="10" height="3.8" fill="#59a869"/><rect x="8.5" y="-2.75" width="11.3" height="5.5" fill="#59a869"/></g></svg>
<div style="left:46.5px;top:775.5px;width:15px;height:15px;background:#bfbfbf;"></div>
<div style="left:39px;top:807px;width:30px;height:2px;background:#d0d0d0;"></div>
<svg style="left:42px;top:820px;" width="24" height="24" viewBox="0 0 24 24"><path d="M2.6 19.6 L12.4 10.4 L15.6 13.6 L5.8 23 Z" fill="#6e6e6e"/><circle cx="16.4" cy="8.9" r="6.1" fill="#6e6e6e"/><g transform="translate(16.4,8.9) rotate(45)"><rect x="-2.3" y="-9" width="4.6" height="9.6" fill="#f2f2f2"/></g></svg>
<div style="left:39px;top:857px;width:30px;height:2px;background:#d0d0d0;"></div>
<svg style="left:42px;top:870px;" width="24" height="24" viewBox="0 0 24 24"><path d="M1.03 22.85 L8.84 11.52 L5.55 7.9 L11.06 7.41 L15 1.33 L22.55 8.48 L16.48 12.59 L15.82 18.09 L12.12 14.64 Z" fill="#6e6e6e"/></svg>
<svg style="left:42px;top:909px;" width="24" height="24" viewBox="0 0 16 16"><path d="M8 3 C4 3 1.6 6 .8 8 C1.6 10 4 13 8 13 C12 13 14.4 10 15.2 8 C14.4 6 12 3 8 3 Z M8 4.8 A3.2 3.2 0 1 1 7.99 4.8 Z" fill="#6e6e6e" fill-rule="evenodd"/><circle cx="8" cy="8" r="1.7" fill="#6e6e6e"/></svg>
<svg style="left:59px;top:930px;" width="9" height="5" viewBox="0 0 9 5"><path d="M0 0 H9 L4.5 5 Z" fill="#3c3c3c"/></svg>
<div style="left:76px;top:783px;width:438px;height:30px;background:#d5d5d5;"></div>
<svg style="left:86px;top:731.5px;" width="16" height="10" viewBox="0 0 16 10"><path d="M1.7 1.7 L8 8 L14.3 1.7" fill="none" stroke="#7a7a7a" stroke-width="1.7"/></svg>
<svg style="left:115px;top:728px;" width="20" height="20" viewBox="0 0 16 16"><circle cx="8" cy="8" r="8" fill="#e05555" fill-opacity="0.72"/><rect x="6.6" y="2.8" width="2.8" height="5.3" fill="#fff"/><rect x="6.6" y="10.1" width="2.8" height="2.7" fill="#fff"/></svg>
<span style="font-size:18px;color:#000;font-weight:700;letter-spacing:0.115px;left:140.9px;top:730.76px;">kotlin-part1:</span>
<span style="font-size:18px;color:#000;letter-spacing:0.017px;left:253.6px;top:730.76px;">build</span>
 
<span style="font-size:18px;color:#000;letter-spacing:-0.086px;left:299.4px;top:730.76px;">failed</span>
<span style="font-size:18px;color:#8c8c8c;letter-spacing:0.584px;left:349.1px;top:730.76px;">At</span>
 
<span style="font-size:18px;color:#8c8c8c;letter-spacing:-0.550px;left:372.7px;top:730.76px;transform-origin:0 0;transform:scaleX(0.9535);">202</span>
<span style="font-size:16px;color:#8c8c8c;left:405.3px;top:730.76px;transform-origin:0 0;transform:scaleX(0.8646);">3</span>
 
<span style="font-size:16px;color:#8c8c8c;letter-spacing:-0.550px;left:420.2px;top:730.76px;transform-origin:0 0;transform:scaleX(0.9425);">sec,</span>
 
<span style="font-size:16px;color:#8c8c8c;letter-spacing:-0.550px;left:454.1px;top:730.76px;transform-origin:0 0;transform:scaleX(0.9803);">641</span>
 
<span style="font-size:16px;color:#8c8c8c;letter-spacing:-0.550px;left:487.7px;top:730.76px;transform-origin:0 0;transform:scaleX(0.9144);">ms</span>
<svg style="left:112.5px;top:761.5px;" width="16" height="10" viewBox="0 0 16 10"><path d="M1.7 1.7 L8 8 L14.3 1.7" fill="none" stroke="#7a7a7a" stroke-width="1.7"/></svg>
<svg style="left:140px;top:756.4px;" width="24" height="24" viewBox="0 0 16 16"><polygon points="7,1 3,5 7,5" fill="#9aa7b0" fill-opacity=".7"/><path d="M8,1 L13,1 L13,8 L7.9,8 L7.9,15 L3,15 L3,6 L8,6 Z" fill="#9aa7b0" fill-opacity=".8"/><g transform="translate(8.85,8.8) scale(0.11916666666666667)" opacity="1"><defs><linearGradient id="kg5" x1="0" y1="1" x2="1" y2="0"><stop offset="0" stop-color="#d650c8"/><stop offset=".35" stop-color="#f4704a"/><stop offset="1" stop-color="#f88909"/></linearGradient></defs><polygon points="0,60 30.1,29.9 60,60" fill="#18a0f0"/><polygon points="0,0 30.1,0 0,32.5" fill="#18a0f0"/><polygon points="30.1,0 0,31.7 0,60 30.1,29.9 60,0" fill="url(#kg5)"/></g></svg>
<span style="font-size:18px;color:#000;letter-spacing:0.137px;left:168.4px;top:760.76px;">NullTest.kt</span>
<span style="font-size:18px;color:#999;letter-spacing:-0.550px;left:259.1px;top:760.76px;transform-origin:0 0;transform:scaleX(0.9694);">src</span>
<span style="font-size:18px;color:#999;left:282px;top:760.76px;transform-origin:0 0;transform:scaleX(0.7824);">₩</span>
<span style="font-size:18px;color:#999;letter-spacing:0.007px;left:295.6px;top:760.76px;">chap02</span>
<span style="font-size:18px;color:#999;left:355.8px;top:760.76px;transform-origin:0 0;transform:scaleX(0.7588);">₩</span>
<span style="font-size:18px;color:#999;letter-spacing:-0.083px;left:369.4px;top:760.76px;">section03</span>
 
<span style="font-size:18px;color:#999;left:452.64px;top:760.76px;">1</span>
 
<span style="font-size:18px;color:#999;letter-spacing:-0.179px;left:469.4px;top:760.76px;">error</span>
<svg style="left:169px;top:788px;" width="20" height="20" viewBox="0 0 16 16"><circle cx="8" cy="8" r="8" fill="#e05555" fill-opacity="0.72"/><rect x="6.6" y="2.8" width="2.8" height="5.3" fill="#fff"/><rect x="6.6" y="10.1" width="2.8" height="2.7" fill="#fff"/></svg>
<span style="font-size:18px;color:#000;letter-spacing:-0.039px;left:195.2px;top:790.76px;">Kotlin:</span>
 
<span style="font-size:18px;color:#000;letter-spacing:-0.239px;left:251.9px;top:790.76px;">Unresolved</span>
 
<span style="font-size:18px;color:#000;letter-spacing:0.039px;left:348.6px;top:790.76px;">reference:</span>
 
<span style="font-size:18px;color:#000;letter-spacing:0.231px;left:436.1px;top:790.76px;">length</span>
<span style="font-size:18px;color:#999;letter-spacing:-0.550px;left:493.4px;top:790.76px;transform-origin:0 0;transform:scaleX(0.9056);">:6</span>
<div style="left:76px;top:956px;width:327px;height:13px;background:#e2e2e2;border:1px solid #d6d6d6;border-left:none;box-sizing:border-box"></div>
<span class="m" style="font-size:20px;color:#0a6ed1;letter-spacing:-0.041px;text-decoration:underline;text-underline-offset:2px;text-decoration-thickness:1.2px;left:534px;top:729.08px;transform-origin:0 16.92px;transform:scaleY(1.07);">C:\Users\user\IdeaProjects\kotlin-part1\src\chap02\section03\NullTest.kt</span>
<span class="m" style="font-size:20px;color:#7f0000;letter-spacing:-0.044px;left:1398px;top:729.08px;transform-origin:0 16.92px;transform:scaleY(1.07);">:6:44</span>
<span class="m" style="font-size:20px;color:#7f0000;letter-spacing:-0.041px;left:534px;top:762.08px;transform-origin:0 16.92px;transform:scaleY(1.07);">Kotlin: Unresolved reference: length</span>
<svg style="left:1890px;top:732px;" width="24" height="26" viewBox="0 0 24 26"><g fill="#6e6e6e"><rect x="2" y="3" width="18" height="3"/><rect x="2" y="18.1" width="4.6" height="2.9"/><path d="M2 10.75 H16.6 A5.15 5.15 0 0 1 16.6 21 H13.6 V18.1 H16.4 A2.2 2.2 0 0 0 16.4 13.7 H2 Z"/><path d="M9.5 19.5 L14 15.2 V23.8 Z"/></g></svg>
<svg style="left:1890px;top:770px;" width="24" height="24" viewBox="0 0 24 24"><g fill="#6e6e6e"><rect x="2" y="5.5" width="6" height="2.9"/><rect x="2" y="11.7" width="6" height="2.9"/><rect x="2" y="17.6" width="18" height="2.9"/><rect x="14.1" y="2.2" width="2.8" height="9"/><path d="M9.7 10.2 H21.3 L15.5 16.2 Z"/></g></svg>
<div style="left:0px;top:970px;width:1920px;height:2px;background:#d1d1d1;"></div>
<div style="left:0px;top:972px;width:1920px;height:31px;background:#f2f2f2;"></div>
<div style="left:455px;top:972px;width:89px;height:31px;background:#bfbfbf;"></div>
<div style="left:0px;top:1003px;width:1920px;height:2px;background:#d1d1d1;"></div>
<div style="left:0px;top:1005px;width:1920px;height:29px;background:#f2f2f2;"></div>
<svg style="left:48px;top:982px;" width="12" height="14" viewBox="0 0 12 14"><path d="M0 0 L12 7 L0 14 Z" fill="#6e6e6e"/></svg>
<span style="font-size:16px;color:#000;letter-spacing:-0.550px;left:71.1px;top:982.66px;transform-origin:0 0;transform:scaleX(0.9661);">Run</span>
<svg style="left:130.2px;top:982.2px;" width="15" height="12.4" viewBox="0 0 15 12.4"><g fill="#6e6e6e"><rect x="0" y=".2" width="2.9" height="2.5" rx=".6"/><rect x="4.8" y=".2" width="10.2" height="2.5"/><rect x="0" y="4.9" width="2.9" height="2.5" rx=".6"/><rect x="4.8" y="4.9" width="10.2" height="2.5"/><rect x="0" y="9.6" width="2.9" height="2.5" rx=".6"/><rect x="4.8" y="9.6" width="10.2" height="2.5"/></g></svg>
<span style="font-size:16px;color:#000;letter-spacing:-0.550px;left:153.0px;top:982.66px;transform-origin:0 0;transform:scaleX(0.9890);">TODO</span>
<svg style="left:228.3px;top:980px;" width="15.5" height="15.5" viewBox="0 0 16 16"><circle cx="8" cy="8" r="8" fill="#db5860" fill-opacity="1"/><rect x="6.6" y="2.8" width="2.8" height="5.3" fill="#fff"/><rect x="6.6" y="10.1" width="2.8" height="2.7" fill="#fff"/></svg>
<span style="font-size:16px;color:#000;letter-spacing:0.146px;left:251.9px;top:982.66px;">Problems</span>
<svg style="left:353.5px;top:981px;" width="17" height="15" viewBox="0 0 17 15"><rect width="17" height="15" rx="1" fill="#6e6e6e"/><path d="M2.6 3.4 L6.6 7 L2.6 10.6" fill="none" stroke="#f2f2f2" stroke-width="1.5"/><rect x="8" y="10.4" width="5.4" height="1.5" fill="#f2f2f2"/></svg>
<span style="font-size:16px;color:#000;letter-spacing:0.304px;left:378.2px;top:982.66px;">Terminal</span>
<svg style="left:468.5px;top:979.5px;" width="19.5" height="19.5" viewBox="0 0 24 24"><g transform="translate(7.6,5.8) rotate(-34)"><path d="M-8 -2.9 H6.2 Q8.2 -2.6 8.6 -0.6 L7.4 2.9 H-8 Z" fill="#6e6e6e"/></g><g transform="translate(7.6,6.6) rotate(37.5)"><rect x="0" y="-1.9" width="10" height="3.8" fill="#6e6e6e"/><rect x="8.5" y="-2.75" width="11.3" height="5.5" fill="#6e6e6e"/></g></svg>
<span style="font-size:16px;color:#000;letter-spacing:-0.245px;left:495.4px;top:982.66px;">Build</span>
<svg style="left:1774px;top:979px;" width="20" height="19.6" viewBox="0 0 20 19.6"><path d="M10 1.15 A8.65 8.65 0 1 0 10 18.45 H18.85 V9.8 A8.75 8.65 0 0 0 10 1.15 Z" fill="none" stroke="#767676" stroke-width="2.3"/></svg>
<span style="font-size:16px;color:#000;letter-spacing:-0.105px;left:1800.3px;top:982.66px;">Event</span>
 
<span style="font-size:16px;color:#000;letter-spacing:0.248px;left:1846.0px;top:982.66px;">Log</span>
<svg style="left:9px;top:1011px;" width="18.5" height="18.2" viewBox="0 0 18.5 18.2"><rect x="3.85" y=".85" width="13.3" height="13.3" fill="none" stroke="#6e6e6e" stroke-width="1.5"/><path d="M.8 3.2 V17.3 H14.9" fill="none" stroke="#6e6e6e" stroke-width="1.5"/></svg>
<span style="font-size:18px;color:#000;letter-spacing:-0.283px;left:41.4px;top:1012.66px;">Build</span>
 
<span style="font-size:18px;color:#000;letter-spacing:0.430px;left:87.0px;top:1012.66px;">completed</span>
 
<span style="font-size:18px;color:#000;letter-spacing:0.128px;left:180.6px;top:1012.66px;">with</span>
 
<span style="font-size:18px;color:#000;left:219.34px;top:1012.66px;">1</span>
 
<span style="font-size:18px;color:#000;letter-spacing:0.246px;left:235.6px;top:1012.66px;">error</span>
 
<span style="font-size:18px;color:#000;letter-spacing:-0.550px;left:281.2px;top:1012.66px;transform-origin:0 0;transform:scaleX(0.9707);">and</span>
 
<span style="font-size:18px;color:#000;left:317.5px;top:1012.66px;transform-origin:0 0;transform:scaleX(0.8986);">0</span>
 
<span style="font-size:18px;color:#000;letter-spacing:-0.378px;left:333.6px;top:1012.66px;">warnings</span>
 
<span style="font-size:18px;color:#000;letter-spacing:-0.550px;left:410.6px;top:1012.66px;transform-origin:0 0;transform:scaleX(0.8986);">in</span>
 
<span style="font-size:18px;color:#000;left:430.8px;top:1012.66px;transform-origin:0 0;transform:scaleX(0.7888);">3</span>
 
<span style="font-size:18px;color:#000;letter-spacing:-0.550px;left:446.2px;top:1012.66px;transform-origin:0 0;transform:scaleX(0.8417);">sec,</span>
 
<span style="font-size:18px;color:#000;letter-spacing:-0.550px;left:483.5px;top:1012.66px;transform-origin:0 0;transform:scaleX(0.9466);">641</span>
 
<span style="font-size:18px;color:#000;letter-spacing:-0.550px;left:518.9px;top:1012.66px;transform-origin:0 0;transform:scaleX(0.9765);">ms</span>
 
<span style="font-size:18px;color:#000;letter-spacing:-0.550px;left:549.3px;top:1012.66px;transform-origin:0 0;transform:scaleX(0.9552);">(20</span>
 
<span style="font-size:18px;color:#000;letter-spacing:-0.372px;left:581.1px;top:1012.66px;">minutes</span>
 
<span style="font-size:18px;color:#000;letter-spacing:-0.177px;left:649.9px;top:1012.66px;">ago)</span>
<span style="font-size:18px;color:#000;letter-spacing:-0.550px;left:1629.4px;top:1012.66px;transform-origin:0 0;transform:scaleX(0.9444);">7:2</span>
<span style="font-size:18px;color:#000;letter-spacing:-0.550px;left:1670.9px;top:1012.66px;transform-origin:0 0;transform:scaleX(0.8685);">CRLF</span>
<span style="font-size:18px;color:#000;letter-spacing:-0.550px;left:1730.4px;top:1012.66px;transform-origin:0 0;transform:scaleX(0.9816);">UTF-8</span>
<span style="font-size:18px;color:#000;left:1797px;top:1012.66px;transform-origin:0 0;transform:scaleX(0.9385);">4</span>
 
<span style="font-size:18px;color:#000;letter-spacing:-0.509px;left:1812.8px;top:1012.66px;">spaces</span>
<svg style="left:1884px;top:1010.5px;" width="17.5" height="17.5" viewBox="0 0 17.5 17.5"><path d="M1.5 8 V5.4 A3.6 3.6 0 0 1 8.7 5.4 V8.4" fill="none" stroke="#6e6e6e" stroke-width="1.9"/><rect x="5.3" y="8.2" width="11.8" height="8.9" fill="#6e6e6e"/></svg>
</div></body></html>
